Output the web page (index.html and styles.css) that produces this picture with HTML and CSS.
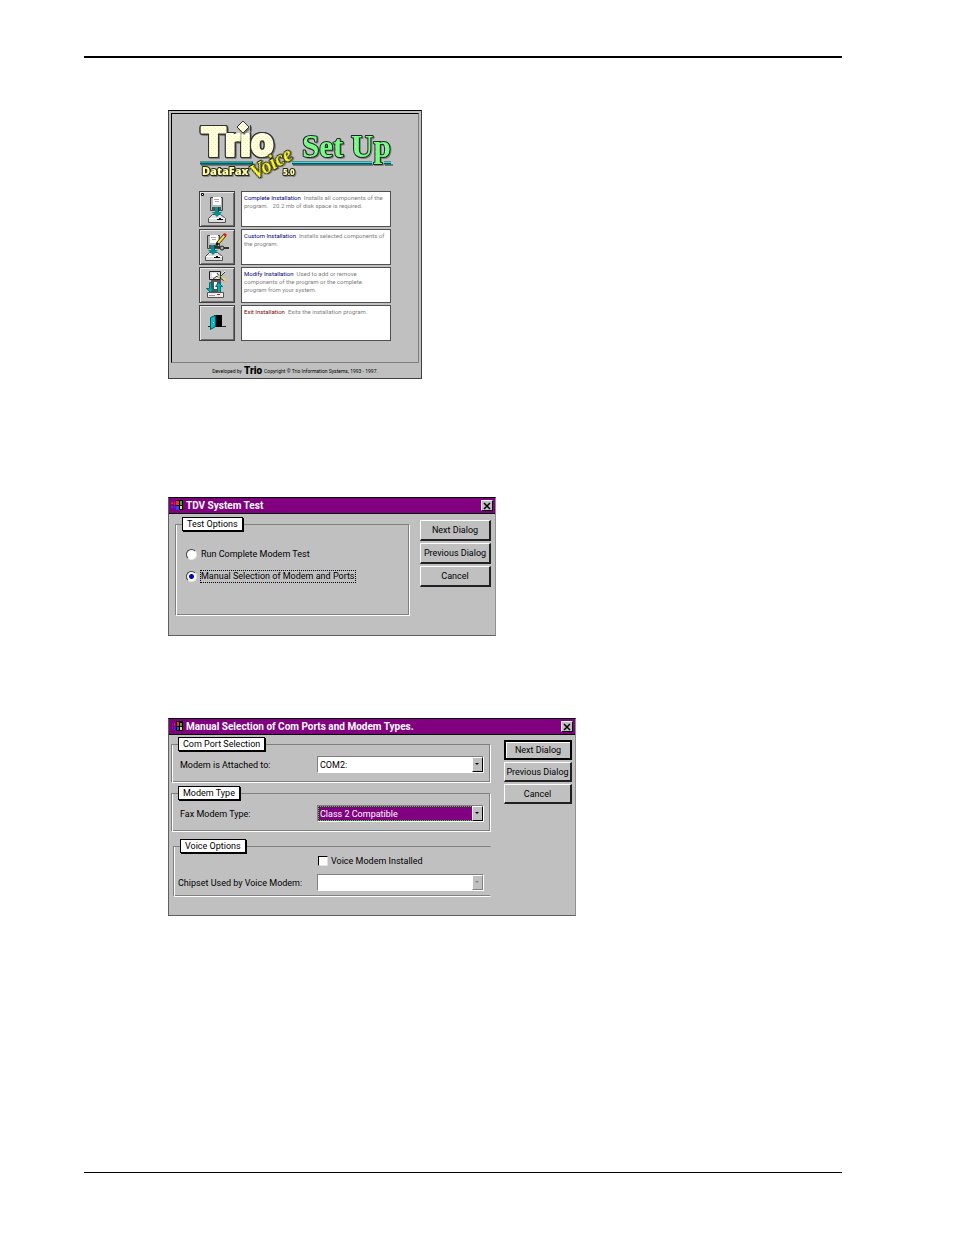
FILE: index.html
```html
<!DOCTYPE html>
<html lang="en">
<head>
<meta charset="utf-8">
<title>Trio DataFax Voice Set Up</title>
<link rel="stylesheet" href="styles.css">
</head>
<body>
<main class="page">

<section class="setup" aria-label="Set Up">
  <div class="setup-panel">
    <svg class="logo" viewBox="0 0 194 62" role="img" aria-label="Trio DataFax Voice 5.0 Set Up">
      <defs>
        <pattern id="dots" width="4" height="4" patternUnits="userSpaceOnUse">
          <rect width="4" height="4" fill="#fffff0"/><rect width="1" height="1" fill="#ffff40"/><rect x="2" y="2" width="1" height="1" fill="#ffff40"/>
        </pattern>
        <pattern id="mint" width="5" height="5" patternUnits="userSpaceOnUse">
          <rect width="5" height="5" fill="#70ff80"/><rect x="1" y="1" width="1" height="1" fill="#d0ffd0"/>
        </pattern>
      </defs>
      <path d="M2 45H55M94 45H174M186 45H194" stroke="#777" stroke-width="2"/>
      <path d="M1 43H54M93 43H173M185 43H192" stroke="#005858" stroke-width="3"/>
      <path d="M1 42.500H53" stroke="#00b0b0"/><path d="M93 42.500H173M185 42.500H192" stroke="#20e0f0"/>
      <text class="word-trio" x="2" y="36">Trio</text>
      <path d="M37 3h14v10H37z" fill="#c0c0c0"/>
      <path d="M45 3l6 6-6 6-6-6z" fill="#777"/>
      <path d="M44 1l6 6-6 6-6-6z" fill="url(#dots)" stroke="#333"/>
      <text class="word-datafax" x="3" y="55">DataFax</text>
      <text class="word-voice" transform="rotate(-29 56 60)" x="56" y="60">Voice</text>
      <text class="word-version" x="84" y="55">5.0</text>
      <text class="word-setup" x="103" y="37">Set Up</text>
    </svg>

    <ul class="choices">
      <li class="choice">
        <button class="choice-button" type="button" aria-label="Complete Installation">
          <svg class="choice-icon" viewBox="0 0 34 34" aria-hidden="true">
            <path d="M1.500 1.500h2v2h-2z" fill="#fff" stroke="#000"/>
            <g id="disk"><path d="M10.500 5.500h12v13h-12z" fill="#b8b8b8" stroke="#404040"/><path d="M13 5h8v8h-8z" fill="#fff"/><path d="M14 7.500h5M15 9.500h4" stroke="#aaa"/><path d="M12 15h9v4h-9z" fill="#505050"/></g>
            <g id="drive"><path d="M12.500 22.500h8l5 4v4h-17v-4z" fill="#e0e0e0" stroke="#505050"/><path d="M9 26.500h16" stroke="#fff"/><path d="M17 27.500h6M19 26.500h2" stroke="#000"/></g>
            <path d="M15 15h4v5h3l-5 5-5-5h3z" fill="#009090"/><path d="M18.500 15v5" stroke="#005050"/>
          </svg>
        </button>
        <p class="choice-text"><b>Complete Installation</b>&nbsp; Installs all components of the program. &nbsp; 20.2 mb of disk space is required.</p>
      </li>
      <li class="choice">
        <button class="choice-button" type="button" aria-label="Custom Installation">
          <svg class="choice-icon" viewBox="0 0 34 34" aria-hidden="true">
            <use href="#disk" x="-3"/><use href="#drive" x="-3"/>
            <path d="M11 15h4v5h3l-5 5-5-5h3z" fill="#009090"/><path d="M14.500 15v5" stroke="#005050"/>
            <path d="M17 12l7-8 2 2-7 8-3 1z" fill="#ffe020" stroke="#333"/><path d="M23 4l2-1 2 2-2 2z" fill="#e02020"/><path d="M16 15l1-3 2 2z" fill="#000"/>
            <path d="M15 17h5M24 18h5" stroke="#333" stroke-width="2"/><circle cx="22" cy="18" r="2" fill="#aaa" stroke="#222"/>
          </svg>
        </button>
        <p class="choice-text"><b>Custom Installation</b>&nbsp; Installs selected components of the program.</p>
      </li>
      <li class="choice">
        <button class="choice-button" type="button" aria-label="Modify Installation">
          <svg class="choice-icon" viewBox="0 0 34 34" aria-hidden="true">
            <path d="M9.500 3.500h11v8h-11z" fill="#ddd" stroke="#222"/><path d="M12 5h6v4h-6z" fill="#fff"/><path d="M11 12h10v12H11z" fill="#555"/><path d="M14 14h3v7h-3z" fill="#fff"/>
            <path d="M12 12l5-4 6 4 3 1M17 5l3 4 5-5" fill="none" stroke="#333"/><path d="M18 8l2 1M23 10l3 3" stroke="#e8d860" stroke-width="2"/><path d="M21 7l4-4" stroke="#eee"/>
            <path d="M9.500 14.500h2v6h2l-3 4-4-4h3zM17.500 24.500v-6h-2l3-4 4 4h-2v6z" fill="#00b0b0" stroke="#007070"/>
            <path d="M7.500 24.500h16v5h-16z" fill="#eee" stroke="#555"/><path d="M9 27.500h6" stroke="#999"/><path d="M17 26.500h3" stroke="#d02020"/>
          </svg>
        </button>
        <p class="choice-text"><b>Modify Installation</b>&nbsp; Used to add or remove<br>components of the program or the complete<br>program from your system.</p>
      </li>
      <li class="choice">
        <button class="choice-button" type="button" aria-label="Exit Installation">
          <svg class="choice-icon" viewBox="0 0 34 34" aria-hidden="true">
            <path d="M8 20.500h18" stroke="#222"/><path d="M14 9h8v12h-8z" fill="#000"/><path d="M10.500 11.500l5-2v11l-5 3z" fill="#00c0c8" stroke="#006060"/><path d="M13 16.500h1" stroke="#fff"/>
          </svg>
        </button>
        <p class="choice-text exit"><b>Exit Installation</b>&nbsp; Exits the installation program.</p>
      </li>
    </ul>
  </div>
  <footer class="setup-footer">Developed by <strong>Trio</strong> Copyright © Trio Information Systems, 1993 - 1997.</footer>
</section>

<form class="dialog dialog-test" aria-label="TDV System Test">
  <header class="titlebar">
    <svg class="flag" viewBox="0 0 12 11" aria-hidden="true"><path d="M0 2h2v2H0zM3 2h1v3H3z" fill="#f02020"/><path d="M0 6h2v2H0zM3 6h1v3H3z" fill="#2040ff"/><path d="M5 0h7v10H5z" fill="#000"/><path d="M5 1h3v4H5z" fill="#f03030"/><path d="M9 1h2v4H9z" fill="#20c020"/><path d="M5 6h3v4H5z" fill="#3040ff"/><path d="M9 6h2v3H9z" fill="#f0e020"/></svg>
    <h2 class="title">TDV System Test</h2>
    <button class="close" type="button" aria-label="Close"><svg viewBox="0 0 8 8" aria-hidden="true"><path d="M1 1l6 6M7 1L1 7" stroke="#000" stroke-width="1.500"/></svg></button>
  </header>
  <div class="dialog-body">
    <fieldset class="group options">
      <legend class="legend">Test Options</legend>
      <label class="option"><input class="radio" type="radio" name="test"><span class="option-text">Run Complete Modem Test</span></label>
      <label class="option"><input class="radio" type="radio" name="test" checked><span class="option-text">Manual Selection of Modem and Ports</span></label>
    </fieldset>
    <div class="actions">
      <button class="action" type="button">Next Dialog</button>
      <button class="action" type="button">Previous Dialog</button>
      <button class="action" type="button">Cancel</button>
    </div>
  </div>
</form>

<form class="dialog dialog-ports" aria-label="Manual Selection of Com Ports and Modem Types">
  <header class="titlebar">
    <svg class="flag" viewBox="0 0 12 11" aria-hidden="true"><path d="M1 3h1v1H1zM3 2h1v3H3z" fill="#c02060"/><path d="M1 6h1v2H1zM3 6h1v3H3z" fill="#2040e0"/><path d="M5 0h7v10H5z" fill="#000"/><path d="M6 1h2v4H6z" fill="#f03030"/><path d="M9 2h2v3H9z" fill="#20c020"/><path d="M6 6h2v3H6z" fill="#3040ff"/><path d="M9 6h2v3H9z" fill="#f0e020"/></svg>
    <h2 class="title">Manual Selection of Com Ports and Modem Types.</h2>
    <button class="close" type="button" aria-label="Close"><svg viewBox="0 0 8 8" aria-hidden="true"><path d="M1 1l6 6M7 1L1 7" stroke="#000" stroke-width="1.500"/></svg></button>
  </header>
  <div class="dialog-body">
    <div class="groups">
      <fieldset class="group">
        <legend class="legend">Com Port Selection</legend>
        <div class="field"><label for="port">Modem is Attached to:</label>
          <span class="combo"><select class="select" id="port"><option>COM2:</option></select><span class="arrow"></span></span></div>
      </fieldset>
      <fieldset class="group">
        <legend class="legend">Modem Type</legend>
        <div class="field"><label for="type">Fax Modem Type:</label>
          <span class="combo"><select class="select selected" id="type"><option>Class 2 Compatible</option></select><span class="arrow"></span></span></div>
      </fieldset>
      <fieldset class="group voice">
        <legend class="legend">Voice Options</legend>
        <label class="check"><input class="checkbox" type="checkbox"><span>Voice Modem Installed</span></label>
        <div class="field"><label for="chip">Chipset Used by Voice Modem:</label>
          <span class="combo"><select class="select" id="chip" disabled><option></option></select><span class="arrow"></span></span></div>
      </fieldset>
    </div>
    <div class="actions">
      <button class="action default" type="button">Next Dialog</button>
      <button class="action" type="button">Previous Dialog</button>
      <button class="action" type="button">Cancel</button>
    </div>
  </div>
</form>

</main>
</body>
</html>
```
FILE: styles.css
```css
* { box-sizing: border-box; }

body {
  margin: 0;
  background: #fff;
  color: #000;
  font-family: Roboto, "Liberation Sans", sans-serif;
  font-size: 9px;
  line-height: 12px;
}

button, select, input { font: inherit; color: inherit; margin: 0; }

.page {
  display: flex;
  flex-direction: column;
  align-items: flex-start;
  min-height: calc(100vh - 118px);
  margin: 56px 112px 62px 84px;
  padding: 52px 84px;
  border-top: 2px solid #000;
  border-bottom: 1px solid #000;
}

/* Set Up window */
.setup {
  width: 254px;
  padding: 2px 2px 0;
  background: #c0c0c0;
  border: 1px solid #404040;
  border-top-color: #000;
}
.setup-panel {
  padding: 6px 27px 21px;
  border: 1px solid #808080;
  border-top-color: #000;
  border-left-color: #000;
}
.logo { display: block; width: 194px; height: 62px; overflow: visible; }
.logo text {
  paint-order: stroke;
  stroke: #222;
  stroke-width: 2px;
  stroke-linejoin: round;
  filter: drop-shadow(1px 1px #808080);
}
.logo .word-trio {
  font: 900 40px Roboto, sans-serif;
  fill: url(#dots);
  stroke: url(#dots);
  filter: drop-shadow(1px 0 #333) drop-shadow(-1px 0 #333) drop-shadow(0 1px #333) drop-shadow(0 -1px #333) drop-shadow(1px 1px #808080);
}
.word-datafax { font: 800 11px "Open Sans", sans-serif; fill: #ffffa0; }
.word-voice { font: italic 700 20px "Liberation Serif", serif; fill: #ffff20; }
.word-version { font: 800 8px "Open Sans", sans-serif; fill: #ffffa0; }
.word-setup { font: 700 31px "Liberation Serif", serif; fill: url(#mint); }

.choices {
  display: grid;
  gap: 2px;
  margin: 9px 0 0;
  padding: 0;
  list-style: none;
}
.choice { display: grid; grid-template-columns: 36px 1fr; gap: 6px; }
.choice-button {
  height: 36px;
  padding: 0;
  background: #c0c0c0;
  border: 1px solid #404040;
  box-shadow: inset 1px 1px #e8e8e8, inset -1px -1px #707070;
}
.choice-icon { display: block; width: 34px; height: 34px; }
.choice-text {
  margin: 0;
  padding: 2px;
  background: #fff;
  border: 1px solid #505050;
  color: #808080;
  font-size: 6px;
  line-height: 8px;
}
.choice-text b { color: #000080; font-weight: 400; }
.choice-text.exit b { color: #800000; }
.setup-footer {
  display: flex;
  align-items: center;
  justify-content: center;
  gap: 2px;
  height: 15px;
  font-size: 5px;
  line-height: 8px;
}
.setup-footer strong { font: 900 10px/12px Roboto, sans-serif; }

/* Dialogs */
.dialog {
  background: #c0c0c0;
  border: 1px solid #606060;
  border-top-color: #000;
  border-right-color: #909090;
}
.dialog-test { width: 328px; margin-top: 118px; }
.dialog-ports { width: 408px; margin-top: 82px; }
.titlebar {
  display: flex;
  align-items: center;
  gap: 3px;
  height: 16px;
  padding: 0 2px;
  background: #800080;
  border-bottom: 1px solid #000;
  color: #fff;
}
.flag { width: 12px; height: 11px; }
.title { flex: 1; margin: 0; font-size: 10px; line-height: 12px; font-weight: 700; }
.close {
  width: 12px;
  height: 11px;
  padding: 0 1px;
  background: #c0c0c0;
  border: 1px solid #fff;
  border-right-color: #000;
  border-bottom-color: #000;
}
.close svg { display: block; width: 8px; height: 8px; }

.dialog-body { display: grid; }
.dialog-test .dialog-body {
  grid-template-columns: 1fr 71px;
  gap: 10px;
  padding: 3px 4px 19px 6px;
}
.dialog-ports .dialog-body {
  grid-template-columns: 1fr 68px;
  gap: 13px;
  padding: 2px 3px 18px 2px;
}

.group {
  min-width: 0;
  margin: 0;
  padding: 5px 6px 9px 8px;
  border: 1px solid #808080;
  border-right-color: #fff;
  border-bottom-color: #fff;
  box-shadow: inset 1px 0 #fff, inset -1px -1px #808080;
}
.legend {
  margin-left: -2px;
  padding: 0 4px;
  background: #fff;
  border: 1px solid #000;
  box-shadow: 1px 1px #000;
}
.options { padding: 16px 10px 32px; }
.options .legend { margin-left: -4px; }
.option { display: flex; align-items: center; gap: 3px; height: 14px; }
.option + .option { margin-top: 8px; }
.option-text { border: 1px dotted transparent; line-height: 11px; }
.radio:checked + .option-text { border-color: #000; }
.radio {
  appearance: none;
  width: 11px;
  height: 11px;
  background: #fff;
  border: 1px solid #404040;
  border-right-color: #e8e8e8;
  border-bottom-color: #e8e8e8;
  border-radius: 50%;
}
.radio:checked { background: radial-gradient(circle, #0000e0 0 2px, #fff 3px); }

.actions { display: grid; gap: 2px; align-content: start; padding-top: 3px; }
.action {
  height: 21px;
  padding: 0;
  background: #c0c0c0;
  border: 1px solid #fff;
  border-right: 2px solid #202020;
  border-bottom: 2px solid #202020;
  white-space: nowrap;
}
.dialog-ports .action { height: 20px; }
.dialog-ports .action.default { border: 2px solid #000; box-shadow: inset 1px 1px #fff; }

.groups { display: grid; gap: 3px; }
.field { display: grid; grid-template-columns: 137px 1fr; align-items: center; }
.combo { position: relative; display: block; }
.select {
  appearance: none;
  display: block;
  width: 100%;
  height: 17px;
  padding: 0 2px;
  background: #fff;
  border: 1px solid #808080;
  border-right-color: #fff;
  border-bottom-color: #fff;
  border-radius: 0;
  opacity: 1;
}
.select.selected {
  background: #800080;
  outline: 1px dotted #00ff00;
  outline-offset: -2px;
  color: #fff;
}
.arrow {
  position: absolute;
  top: 1px;
  right: 1px;
  width: 11px;
  height: 15px;
  background: #c0c0c0;
  border: 1px solid #fff;
  border-right-color: #000;
  border-bottom-color: #000;
  pointer-events: none;
}
.arrow::after {
  content: "";
  position: absolute;
  top: 5px;
  left: 2px;
  border: 2px solid transparent;
  border-top-color: #000;
  border-bottom: 0;
}
.select:disabled + .arrow { border-right-color: #808080; border-bottom-color: #808080; }
.select:disabled + .arrow::after { border-top-color: #808080; }
.voice {
  margin: 4px 0 0 2px;
  padding: 2px 6px 5px 4px;
  border-right-color: transparent;
  box-shadow: inset 1px 0 #fff, inset 0 -1px #808080;
}
.voice .legend { margin-left: 2px; }
.voice .field { grid-template-columns: 139px 1fr; }
.check { display: flex; align-items: center; gap: 3px; margin: 0 0 7px 140px; }
.checkbox {
  appearance: none;
  width: 10px;
  height: 10px;
  background: #fff;
  border: 1px solid #000;
  border-right-color: #e0e0e0;
  border-bottom-color: #e0e0e0;
}
.checkbox:checked { background: #000; }
```
